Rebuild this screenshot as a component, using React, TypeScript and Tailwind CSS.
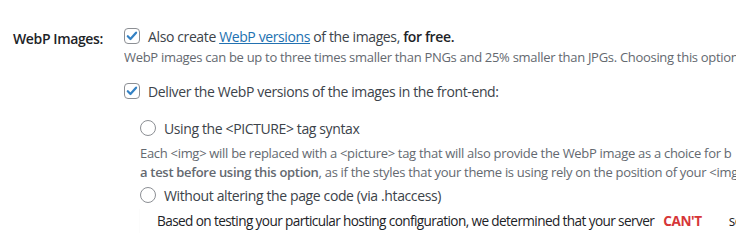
import React from "react";

function Checkbox() {
    return (
        <span className="inline-flex h-4 w-4 shrink-0 items-center justify-center rounded-[4px] border border-[#8c8f94] bg-white">
            <svg viewBox="0 0 20 20" className="h-[16px] w-[16px]">
                <path d="M4 10.4l3.8 3.8 8-9" fill="none" stroke="#3582c4" strokeWidth={3.2} strokeLinecap="round" strokeLinejoin="round" />
            </svg>
        </span>
    );
}

function Radio() {
    return <span className="inline-block h-4 w-4 shrink-0 rounded-full border border-[#8c8f94] bg-white" />;
}

export default function App() {
    return (
        <div className="h-[244px] w-[736px] overflow-hidden bg-white text-[14px] tracking-[-0.38px] text-[#3c434a]" style={{ fontFamily: '"Open Sans", "Noto Sans", sans-serif' }}>
            <div className="flex pt-6">
                {/* label column */}
                <div className="w-[124px] shrink-0 pl-[13px] pt-[3px] font-semibold leading-6 text-[#1d2327]">WebP Images:</div>

                {/* options column */}
                <div className="min-w-0 flex-1 overflow-hidden whitespace-nowrap">
                    <label className="flex h-6 items-center gap-2">
                        <Checkbox />
                        <span>
                            Also create <a className="text-[#2271b1] underline">WebP versions</a> of the images, <b className="font-semibold text-[#1d2327]">for free.</b>
                        </span>
                    </label>
                    <p className="text-[13px] leading-[18px] tracking-[-0.3px] text-[#646970]">
                        WebP images can be up to three times smaller than PNGs and 25% smaller than JPGs. Choosing this option
                    </p>

                    <label className="mt-[13px] flex h-6 items-center gap-2">
                        <Checkbox />
                        <span>Deliver the WebP versions of the images in the front-end:</span>
                    </label>

                    <div className="pl-4">
                        <label className="mt-[13px] flex h-6 items-center gap-2">
                            <Radio />
                            <span>Using the &lt;PICTURE&gt; tag syntax</span>
                        </label>
                        <p className="mt-[4px] text-[13px] leading-[19px] tracking-[-0.3px] text-[#646970]">
                            Each &lt;img&gt; will be replaced with a &lt;picture&gt; tag that will also provide the WebP image as a choice for b
                            <br />
                            <b className="font-semibold">a test before using this option</b>, as if the styles that your theme is using rely on the position of your &lt;img
                        </p>
                        <label className="mt-[1px] flex h-6 items-center gap-2">
                            <Radio />
                            <span>Without altering the page code (via .htaccess)</span>
                        </label>
                        <div className="mt-px h-[25px] bg-white pl-[17px] text-[13.6px] leading-[25px] tracking-[-0.6px] text-[#1d2327] shadow-[0_1px_1px_rgba(0,0,0,0.08)]">
                            Based on testing your particular hosting configuration, we determined that your server
                            <b className="ml-[9px] font-bold tracking-[-0.4px] text-[#d63638]">CAN'T</b>
                            <span className="ml-[27px]">serve</span>
                        </div>
                    </div>
                </div>
            </div>
        </div>
    );
}
